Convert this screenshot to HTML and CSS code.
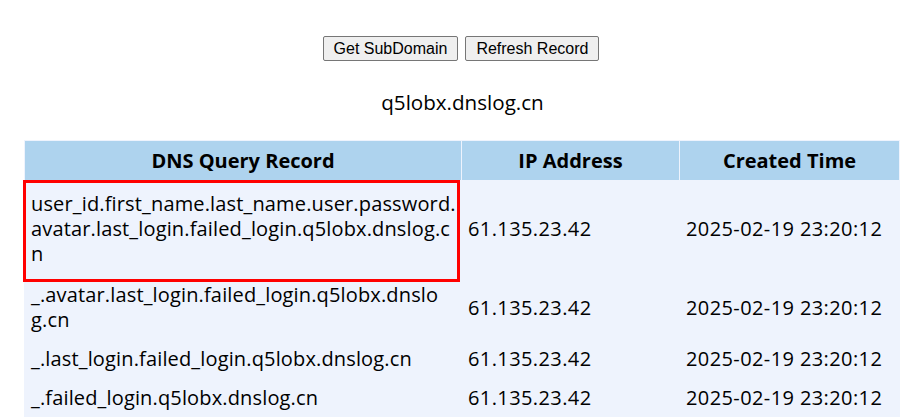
FILE: index.html
```html
<!DOCTYPE html>
<html>
<head>
<meta charset="utf-8">
<link rel="stylesheet" href="styles.css">
</head>
<body>
<div class="page">
  <div class="actions">
    <button class="btn">Get SubDomain</button>
    <button class="btn">Refresh Record</button>
  </div>
  <div class="domain">q5lobx.dnslog.cn</div>
  <table class="records">
    <colgroup>
      <col class="c1"><col class="c2"><col class="c3">
    </colgroup>
    <thead>
      <tr><th>DNS Query Record</th><th>IP Address</th><th>Created Time</th></tr>
    </thead>
    <tbody>
      <tr class="r1"><td class="mark">user_id.first_name.last_name.user.password.avatar.last_login.failed_login.q5lobx.dnslog.cn</td><td class="num">61.135.23.42</td><td class="num">2025-02-19 23:20:12</td></tr>
      <tr class="r2"><td>_.avatar.last_login.failed_login.q5lobx.dnslo<br>g.cn</td><td class="num">61.135.23.42</td><td class="num">2025-02-19 23:20:12</td></tr>
      <tr class="r3"><td>_.last_login.failed_login.q5lobx.dnslog.cn</td><td class="num">61.135.23.42</td><td class="num">2025-02-19 23:20:12</td></tr>
      <tr class="r3"><td>_.failed_login.q5lobx.dnslog.cn</td><td class="num">61.135.23.42</td><td class="num">2025-02-19 23:20:12</td></tr>
    </tbody>
  </table>
</div>
</body>
</html>
```
FILE: styles.css
```css
html, body { margin: 0; padding: 0; background: #fff; }
body { font-family: "Open Sans", "Noto Sans", sans-serif; color: #000; overflow: hidden; }
.page { width: 875px; margin-left: 24px; padding-top: 36px; }
.actions { display: flex; justify-content: center; gap: 7px; padding-right: 1px; }
.btn {
  font-family: "Liberation Sans", Arial, sans-serif;
  font-size: 16px;
  height: 25px;
  padding: 0 10px;
  background: #efefef;
  border: 1px solid #767676;
  border-radius: 2px;
  color: #000;
}
.domain { text-align: center; font-size: 20.6px; line-height: 26px; margin-top: 28px; margin-left: 2px; }
.records {
  margin-top: 25px;
  width: 875px;
  table-layout: fixed;
  border-collapse: separate;
  border-spacing: 1px;
  background: #eef3fd;
}
.c1 { width: 436px; }
.c2 { width: 217px; }
.c3 { width: 219px; }
th {
  background: #aed3ee;
  font-size: 20px;
  font-weight: bold;
  height: 39px;
  padding: 0;
}
td {
  font-size: 20px;
  letter-spacing: 0.15px;
  line-height: 25px;
  padding: 7px 3px 6px 6px;
  word-break: break-all;
  vertical-align: middle;
}
td.num { letter-spacing: 0.4px; }
.r1 td { height: 80px; }
.mark { position: relative; }
.mark::after {
  content: "";
  position: absolute;
  left: -2px; top: -1px; right: 1px; bottom: -8px;
  border: 3px solid #f00;
  pointer-events: none;
}
```
